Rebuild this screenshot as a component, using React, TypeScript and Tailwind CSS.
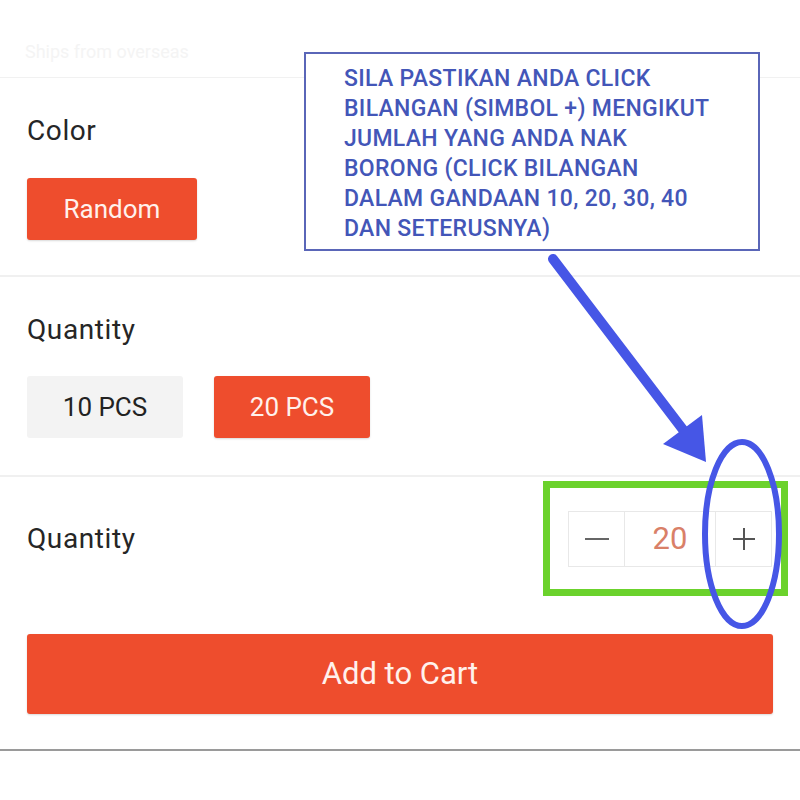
import React from "react";

const OptionButton: React.FC<{ label: string; active?: boolean; width: string }> = ({
  label,
  active = false,
  width,
}) => (
  <div
    className={`flex h-[62px] items-center justify-center rounded-[3px] text-[26px] ${width} ${
      active ? "bg-[#ee4d2d] text-[#fff1ec] shadow-[0_1px_2px_rgba(0,0,0,0.15)]" : "bg-[#f3f3f3] text-[#222]"
    }`}
  >
    {label}
  </div>
);

const Stepper: React.FC<{ value: number }> = ({ value }) => (
  <div className="flex h-[56px] border border-[#e8e8e8] text-[#555]">
    <div className="flex w-[56px] items-center justify-center border-r border-[#e8e8e8]">
      <span className="block h-[2px] w-[24px] bg-[#666]" />
    </div>
    <div className="flex w-[91px] items-center justify-center border-r border-[#e8e8e8] text-[31px] text-[#d98068]">
      {value}
    </div>
    <div className="relative flex w-[55px] items-center justify-center">
      <span className="block h-[2px] w-[22px] bg-[#555]" />
      <span className="absolute h-[22px] w-[2px] bg-[#555]" />
    </div>
  </div>
);

export default function App() {
  return (
    <div className="relative h-[800px] w-[800px] overflow-hidden bg-white font-['Roboto','Liberation_Sans',sans-serif]">
      <div className="h-[78px] border-b border-[#f1f1f1] pl-[25px] pt-[38px]">
        <span className="text-[18px] text-[#f4f4f4]">Ships from overseas</span>
      </div>

      <div className="border-b-2 border-[#f0f0f0] px-[27px] pb-[35px] pt-[37px]">
        <div className="text-[28px] leading-[32px] tracking-[0.6px] text-[#262626]">Color</div>
        <div className="mt-[31px] flex">
          <OptionButton label="Random" active width="w-[170px]" />
        </div>
      </div>

      <div className="border-b-2 border-[#f0f0f0] px-[27px] pb-[37px] pt-[37px]">
        <div className="text-[28px] leading-[32px] tracking-[0.6px] text-[#262626]">Quantity</div>
        <div className="mt-[30px] flex gap-[31px]">
          <OptionButton label="10 PCS" width="w-[156px]" />
          <OptionButton label="20 PCS" active width="w-[156px]" />
        </div>
      </div>

      <div className="flex items-center justify-between pl-[27px] pr-[28px] pt-[34px]">
        <div className="text-[28px] leading-[32px] tracking-[0.6px] text-[#262626]">Quantity</div>
        <Stepper value={20} />
      </div>

      <div className="px-[27px] pt-[67px]">
        <div className="flex h-[80px] items-center justify-center rounded-[3px] bg-[#ee4d2d] text-[31px] text-[#fff1ec] shadow-[0_1px_2px_rgba(0,0,0,0.15)]">
          Add to Cart
        </div>
      </div>

      <div className="mt-[35px] h-[2px] bg-[#9a9a9a]" />

      {/* annotations drawn over the screenshot */}
      <div className="absolute left-[304px] top-[52px] h-[199px] w-[456px] border-2 border-[#5a66b8] bg-white pl-[38px] pt-[10px] text-[23px] font-medium leading-[30px] tracking-[0.3px] text-[#4356b8]">
        SILA PASTIKAN ANDA CLICK
        <br />
        BILANGAN (SIMBOL +) MENGIKUT
        <br />
        JUMLAH YANG ANDA NAK
        <br />
        BORONG (CLICK BILANGAN
        <br />
        DALAM GANDAAN 10, 20, 30, 40
        <br />
        DAN SETERUSNYA)
      </div>

      <div className="absolute left-[543px] top-[481px] h-[115px] w-[245px] border-[7px] border-[#6bd22c]" />

      <svg className="pointer-events-none absolute inset-0" width="800" height="800" viewBox="0 0 800 800">
        <line x1="553" y1="259" x2="684" y2="431" stroke="#4656e6" strokeWidth="10" strokeLinecap="round" />
        <polygon points="663,444 702,415 706,462" fill="#4656e6" />
        <ellipse cx="742" cy="534" rx="37" ry="92" fill="none" stroke="#4656e6" strokeWidth="6" />
      </svg>
    </div>
  );
}
